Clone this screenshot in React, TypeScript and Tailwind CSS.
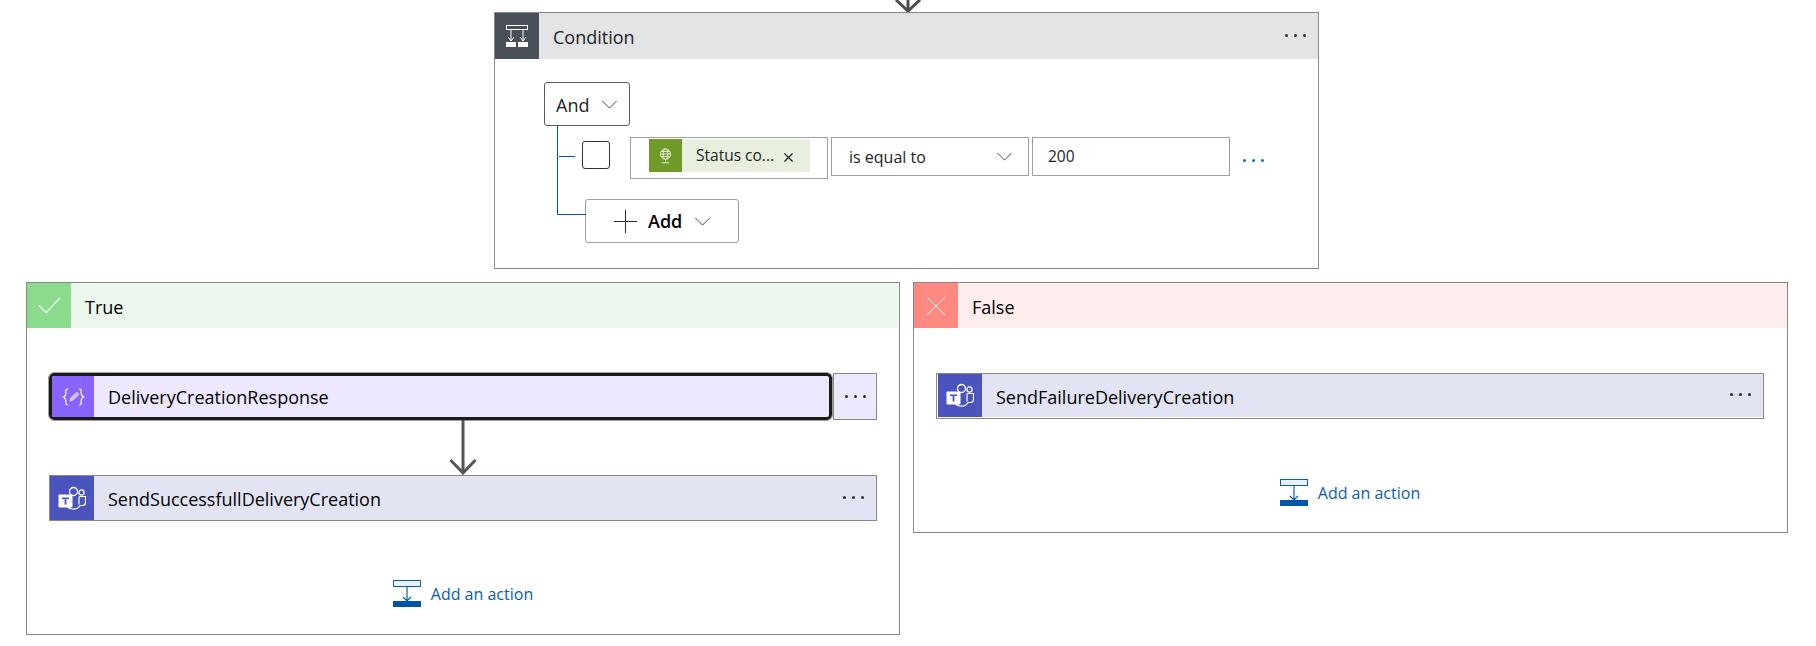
import type { ReactNode } from 'react';

const font = { fontFamily: '"Open Sans", "Noto Sans", sans-serif' };

function Dots({ blue }: { blue?: boolean }) {
  const color = blue ? 'bg-[#0a6cc4]' : 'bg-[#323130]';
  return (
    <div className="flex gap-[6px]">
      <span className={`w-[3px] h-[3px] rounded-full ${color}`} />
      <span className={`w-[3px] h-[3px] rounded-full ${color}`} />
      <span className={`w-[3px] h-[3px] rounded-full ${color}`} />
    </div>
  );
}

function Chevron({ className }: { className: string }) {
  return (
    <svg viewBox="0 0 18 10" className={className} fill="none" stroke="#484644" strokeWidth="1.1">
      <path d="M1 1l8 8 8-8" />
    </svg>
  );
}

function ConditionIcon() {
  return (
    <svg viewBox="0 0 24 24" className="w-[24px] h-[24px]" fill="none" stroke="#fff" strokeWidth="1">
      <rect x="1.5" y="1.5" width="21" height="4" />
      <path d="M6 5.5V17M18 5.5V17M3 13l3 4 3-4M15 13l3 4 3-4" />
      <rect x="1" y="18" width="10" height="5" fill="#fff" stroke="none" />
      <rect x="13" y="18" width="10" height="5" fill="#fff" stroke="none" />
    </svg>
  );
}

function GlobeIcon() {
  return (
    <svg viewBox="0 0 20 24" className="w-[13px] h-[16px]" fill="none" stroke="#fff" strokeWidth="1.2">
      <circle cx="10" cy="9" r="8" />
      <ellipse cx="10" cy="9" rx="3.5" ry="8" />
      <path d="M2 9h16M3.5 5h13M3.5 13h13M10 17v4M4 22.5h12" />
    </svg>
  );
}

function TeamsIcon() {
  return (
    <svg viewBox="0 0 28 24" className="w-[28px] h-[25px]">
      <circle cx="15.5" cy="5" r="4" fill="none" stroke="#fff" strokeWidth="1.3" />
      <circle cx="23.5" cy="6" r="2.6" fill="none" stroke="#fff" strokeWidth="1.2" />
      <path
        d="M8 11v6.5a7.5 6.5 0 0 0 14 1.5h2.5a3 3 0 0 0 3-3V10h-6M21 10v8"
        fill="none"
        stroke="#fff"
        strokeWidth="1.2"
      />
      <rect x="0.5" y="8" width="14" height="13" rx="1" fill="#fff" />
      <path d="M4 11h7v1.6H8.4V18H6.6v-5.4H4z" fill="#4b53bc" />
    </svg>
  );
}

function VariableIcon() {
  return (
    <svg viewBox="0 0 24 24" preserveAspectRatio="none" className="w-[23px] h-[20px]" fill="none" stroke="#fff" strokeWidth="1.3" strokeLinecap="round">
      <path d="M6 2.5C3.5 2.5 4 5 4 7.5S3.5 11 1.5 12C3.5 13 4 14 4 16.5S3.5 21.5 6 21.5" />
      <path d="M18 2.5C20.5 2.5 20 5 20 7.5S20.5 11 22.5 12C20.5 13 20 14 20 16.5S20.5 21.5 18 21.5" />
      <path d="M8.5 16.5l.8-3.5 5-5.5a1.7 1.7 0 0 1 2.5 2.4l-5 5.4z" fill="#fff" fillOpacity="0.55" stroke="#fff" strokeWidth="0.8" />
    </svg>
  );
}

function ActionRow({
  icon,
  iconBg,
  rowBg,
  title,
  selected,
  inset,
}: {
  icon: ReactNode;
  iconBg: string;
  rowBg: string;
  title: string;
  selected?: boolean;
  inset?: boolean;
}) {
  if (selected) {
    return (
      <div className="flex h-[47px] gap-[1px]">
        <div className={`flex-1 flex items-stretch rounded-[5px] border-[3px] border-[#1b1a19] outline outline-1 outline-[#a19f9d] overflow-hidden ${rowBg}`}>
          <div className={`w-[42px] flex items-center justify-center ${iconBg}`}>{icon}</div>
          <span className="ml-[14px] pt-[2px] self-center text-[18px] text-black">{title}</span>
        </div>
        <div className={`w-[44px] border border-[#8a8886] flex items-center justify-center ${rowBg}`}>
          <Dots />
        </div>
      </div>
    );
  }
  return (
    // the False branch row has a thin white gap inside its border
    <div className={`flex h-[46px] border border-[#8a8886] bg-white ${inset ? 'pl-[1px] pb-[1px]' : ''}`}>
      <div className={`flex-1 flex items-stretch ${rowBg}`}>
        <div className={`w-[44px] flex items-center justify-center ${iconBg}`}>{icon}</div>
        <span className={`ml-[14px] self-center text-[18px] text-black flex-1 ${inset ? 'pt-[3px]' : 'pt-[2px]'}`}>{title}</span>
        <div className="pr-[12px] flex items-center pb-[2px]">
          <Dots />
        </div>
      </div>
    </div>
  );
}

function AddAction() {
  return (
    <div className="flex items-center justify-center gap-[10px]">
      <svg viewBox="0 0 28 27" className="w-[28px] h-[27px]" fill="none" stroke="#0a5cab">
        <rect x="0.5" y="0.5" width="27" height="6" strokeWidth="1" fill="#e8f1fa" />
        <path d="M14 7v14M10 17l4 4 4-4" strokeWidth="1.2" />
        <rect x="0" y="21" width="28" height="6" fill="#0055a8" stroke="none" />
      </svg>
      <span className="text-[16px] text-[#0a5cb0]">Add an action</span>
    </div>
  );
}

function BranchHeader({
  title,
  icon,
  iconBg,
  bg,
}: {
  title: string;
  icon: ReactNode;
  iconBg: string;
  bg: string;
}) {
  return (
    <div className={`flex items-stretch h-[45px] ${bg}`}>
      <div className={`w-[44px] flex items-center justify-center ${iconBg}`}>{icon}</div>
      <span className="ml-[14px] pt-[4px] self-center text-[18px] text-black">{title}</span>
    </div>
  );
}

function ConditionCard() {
  return (
    <div className="ml-[494px] w-[825px] h-[257px] border border-[#8a8886] bg-white">
      <div className="flex items-stretch h-[46px] bg-[#e3e4e6]">
        <div className="w-[44px] flex items-center justify-center bg-[#484f58]">
          <ConditionIcon />
        </div>
        <span className="ml-[14px] pt-[2px] self-center text-[18px] text-[#201f1e]">Condition</span>
        <div className="ml-auto pr-[12px] pb-[1px] flex items-center">
          <Dots />
        </div>
      </div>

      <div className="relative pl-[49px] pt-[23px]">
        {/* tree connector */}
        <svg className="absolute left-[61px] top-[66px] w-[30px] h-[91px]" fill="none" stroke="#0055a8" strokeWidth="1">
          <path d="M1.5 0V89.5H30M3 31.5H19" />
        </svg>

        <div className="w-[86px] h-[44px] border border-[#605e5c] rounded-[3px] flex items-center pl-[11px] gap-[12px]">
          <span className="text-[18px] pt-[2px] text-[#201f1e]">And</span>
          <Chevron className="w-[17px] h-[9px]" />
        </div>

        <div className="flex items-start mt-[11px] ml-[38px]">
          <div className="w-[28px] h-[28px] mt-[4px] border border-[#323130] rounded-[3px]" />
          <div className="ml-[20px] w-[198px] h-[42px] border border-[#a19f9d] pl-[18px] pt-[1px]">
            <div className="w-[161px] h-[33px] bg-[#e8efdf] flex items-center">
              <div className="w-[33px] h-[33px] bg-[#6f9a28] flex items-center justify-center">
                <GlobeIcon />
              </div>
              <span className="ml-[14px] text-[15.5px] text-[#201f1e]">Status co...</span>
              <svg viewBox="0 0 10 10" className="ml-[10px] mt-[3px] w-[9px] h-[9px]" fill="none" stroke="#201f1e" strokeWidth="1.4">
                <path d="M.5.5l9 9M9.5.5l-9 9" />
              </svg>
            </div>
          </div>
          <div className="ml-[3px] w-[198px] h-[39px] border border-[#a19f9d] flex items-center pl-[17px]">
            <span className="text-[16px] pt-[1px] text-[#201f1e]">is equal to</span>
            <Chevron className="ml-auto mr-[15px] w-[17px] h-[9px]" />
          </div>
          <div className="ml-[3px] w-[198px] h-[39px] border border-[#a19f9d] flex items-center pl-[15px]">
            <span className="text-[15.5px] text-[#201f1e]">200</span>
          </div>
          <div className="ml-[13px] h-[46px] flex items-center">
            <Dots blue />
          </div>
        </div>

        <div className="mt-[16px] ml-[41px] w-[154px] h-[44px] border border-[#a19f9d] rounded-[3px] flex items-center pl-[28px]">
          <svg viewBox="0 0 22 22" className="w-[23px] h-[23px]" fill="none" stroke="#323130" strokeWidth="1">
            <path d="M0 11h22M11 0v22" />
          </svg>
          <span className="ml-[11px] text-[18px] font-semibold text-black">Add</span>
          <Chevron className="ml-[12px] w-[17px] h-[9px]" />
        </div>
      </div>
    </div>
  );
}

export default function App() {
  return (
    <div className="w-[1816px] h-[646px] overflow-hidden bg-white" style={font}>
      <div className="h-[12px] pl-[895px] overflow-hidden">
        <svg viewBox="0 0 26 13" className="w-[26px] h-[13px]" fill="none" stroke="#4f4f4f" strokeWidth="3">
          <path d="M13 0v11M1 0l12 11L25 0" />
        </svg>
      </div>

      <ConditionCard />

      <div className="flex items-start pl-[26px] mt-[13px]">
        <div className="w-[874px] h-[353px] border border-[#8a8886]">
          <BranchHeader
            title="True"
            bg="bg-[#ecf7ee]"
            iconBg="bg-[#8adb8c]"
            icon={
              <svg viewBox="0 0 24 18" className="w-[23px] h-[17px]" fill="none" stroke="#fff" strokeWidth="1.3">
                <path d="M1 9l7.5 7.5L23 1" />
              </svg>
            }
          />
          <div className="px-[22px] pt-[45px]">
            <ActionRow
              selected
              title="DeliveryCreationResponse"
              rowBg="bg-[#ede8ff]"
              iconBg="bg-[#8764ff]"
              icon={<VariableIcon />}
            />
            <div className="h-[55px] flex justify-center">
              <svg viewBox="0 0 28 55" className="w-[28px] h-[55px]" fill="none" stroke="#555" strokeWidth="3">
                <path d="M14 0v53M1.5 40L14 53 26.5 40" />
              </svg>
            </div>
            <ActionRow
              title="SendSuccessfullDeliveryCreation"
              rowBg="bg-[#e2e4f3]"
              iconBg="bg-[#4b53bc]"
              icon={<TeamsIcon />}
            />
            <div className="mt-[59px]">
              <AddAction />
            </div>
          </div>
        </div>

        <div className="ml-[13px] w-[875px] h-[251px] border border-[#8a8886]">
          <BranchHeader
            title="False"
            bg="bg-[#ffecec]"
            iconBg="bg-[#ff8880]"
            icon={
              <svg viewBox="0 0 18 18" className="w-[18px] h-[18px]" fill="none" stroke="#fff" strokeWidth="1">
                <path d="M0 0l18 18M18 0L0 18" />
              </svg>
            }
          />
          <div className="pl-[22px] pr-[23px] pt-[45px]">
            <ActionRow
              inset
              title="SendFailureDeliveryCreation"
              rowBg="bg-[#e2e4f3]"
              iconBg="bg-[#4b53bc]"
              icon={<TeamsIcon />}
            />
            <div className="mt-[60px]">
              <AddAction />
            </div>
          </div>
        </div>
      </div>
    </div>
  );
}
